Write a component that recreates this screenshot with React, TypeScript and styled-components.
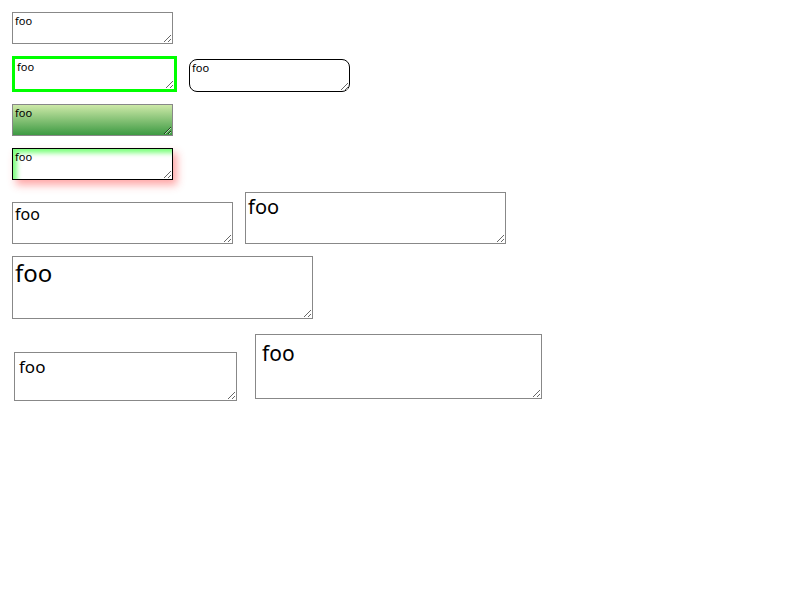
import React from 'react';
import styled, { createGlobalStyle, css } from 'styled-components';

const Global = createGlobalStyle`
  html, body {
    margin: 0;
    background: #fff;
  }
`;

const Page = styled.div`
  display: flex;
  flex-direction: column;
  align-items: flex-start;
  gap: 12px;
  padding: 12px;
`;

const Row = styled.div<{ $gap?: number; $top?: number }>`
  display: flex;
  align-items: flex-end;
  gap: ${(p) => p.$gap ?? 12}px;
  margin-top: ${(p) => p.$top ?? 0}px;
`;

type Variant = 'plain' | 'green' | 'rounded' | 'gradient' | 'shadow';

const variants: Record<Variant, ReturnType<typeof css>> = {
  plain: css``,
  green: css`
    border: 3px solid #00ff00;
  `,
  rounded: css`
    border: 1px solid #000;
    border-radius: 8px;
  `,
  gradient: css`
    background: linear-gradient(#cde9a8, #3d9a43);
  `,
  shadow: css`
    border: 1px solid #000;
    box-shadow: inset 5px 5px 5px -1px #7dff7d, 4px 5px 8px rgba(255, 60, 60, 0.45);
  `,
};

const Area = styled.textarea<{
  $w: number;
  $h: number;
  $size?: number;
  $pad?: number;
  $left?: number;
  $lift?: number;
  $variant?: Variant;
}>`
  box-sizing: border-box;
  display: block;
  width: ${(p) => p.$w}px;
  height: ${(p) => p.$h}px;
  margin: 0 0 ${(p) => p.$lift ?? 0}px ${(p) => p.$left ?? 0}px;
  padding: ${(p) => p.$pad ?? 2}px;
  border: 1px solid #888;
  background: #fff;
  color: #000;
  font-family: 'Noto Sans', 'DejaVu Sans', sans-serif;
  font-size: ${(p) => p.$size ?? 11}px;
  line-height: 1.15;
  outline: none;
  overflow: auto;
  resize: both;
  ${(p) => variants[p.$variant ?? 'plain']}
`;

export default function App() {
  return (
    <>
      <Global />
      <Page>
        <Row>
          <Area readOnly defaultValue="foo" $w={161} $h={32} />
        </Row>
        <Row>
          <Area readOnly defaultValue="foo" $w={165} $h={36} $variant="green" />
          <Area readOnly defaultValue="foo" $w={161} $h={33} $variant="rounded" />
        </Row>
        <Row>
          <Area readOnly defaultValue="foo" $w={161} $h={32} $variant="gradient" />
        </Row>
        <Row>
          <Area readOnly defaultValue="foo" $w={161} $h={32} $variant="shadow" />
        </Row>
        <Row>
          <Area readOnly defaultValue="foo" $w={221} $h={42} $size={16} />
          <Area readOnly defaultValue="foo" $w={261} $h={52} $size={20} />
        </Row>
        <Row>
          <Area readOnly defaultValue="foo" $w={301} $h={63} $size={24} />
        </Row>
        <Row $gap={18} $top={3}>
          <Area readOnly defaultValue="foo" $w={223} $h={49} $size={17} $pad={4} $left={2} />
          <Area readOnly defaultValue="foo" $w={287} $h={65} $size={21} $pad={6} $lift={2} />
        </Row>
      </Page>
    </>
  );
}
